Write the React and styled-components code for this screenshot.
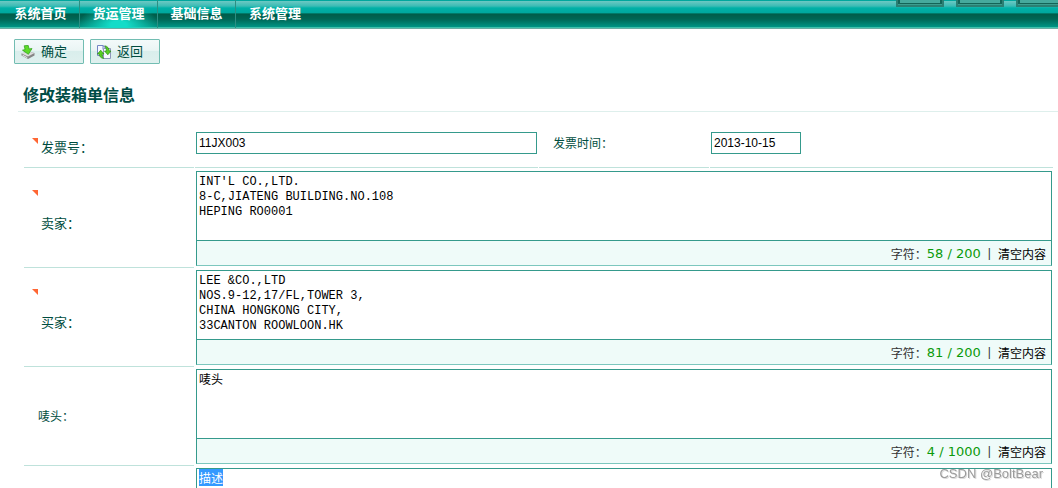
import React, { useEffect, useRef, useState } from "react";
import styled, { createGlobalStyle, css } from "styled-components";

const menus = ["系统首页", "货运管理", "基础信息", "系统管理"];

const DownloadIcon = () => (
  <svg width="14" height="14" viewBox="0 0 14 14" aria-hidden="true">
    <path d="M.5 8.500 6.500 6.500l7 1.500v2.500L7 14l-6.500-3.500z" fill="#858585" />
    <path d="M.5 8.500 6.500 6.500l7 1.500L7 11.500z" fill="#dcdcdc" />
    <path d="M1.500 10.200l4.800 2.500" stroke="#f2f2f2" strokeWidth="1" />
    <path d="M3.200.8 7.200.4l.9 3.500 2.900-.3L7.400 9.300 1.500 5.200l2.600-.6z" fill="#5ddb28" stroke="#35a51f" strokeWidth=".8" />
  </svg>
);

const SwapIcon = () => (
  <svg width="14" height="14" viewBox="0 0 14 14" aria-hidden="true">
    <path d="M.5.500h5.500l2 2v8H.500z" fill="#f6f9ff" stroke="#7485c4" />
    <path d="M6 4.500V.500l2 2" fill="none" stroke="#7485c4" />
    <path d="M6.500 3.500h7v10h-7z" fill="#f6f9ff" stroke="#8f98ba" />
    <path d="M3.700 5.200 7 9H5.100c0 1.800.4 3 1.600 4.500C4 13.300 2.300 11.500 2.200 9H.4z" fill="#56cf22" stroke="#2b8c14" strokeWidth=".7" />
    <path d="M10.800 9.800 7.500 6h1.900c0-1.800-.4-3.600-1.600-5.200C10.500 1.200 12.200 3.500 12.300 6H14z" fill="#56cf22" stroke="#2b8c14" strokeWidth=".7" />
  </svg>
);

const CountArea = ({ id, label, initial, count, max, mono, selected }) => {
  const [text, setText] = useState(initial);
  const [used, setUsed] = useState(count);
  const area = useRef(null);

  useEffect(() => {
    if (selected) {
      area.current.focus({ preventScroll: true });
      area.current.select();
    }
  }, [selected]);

  const change = (value) => {
    setText(value);
    setUsed(value.length);
  };

  return (
    <AreaBox>
      <Area
        id={id}
        ref={area}
        aria-label={label}
        $mono={mono}
        spellCheck={false}
        value={text}
        onChange={(e) => change(e.target.value)}
      />
      {max && (
        <Counter>
          <span>字符：</span>
          <Count>{used} / {max}</Count>
          <Bar>|</Bar>
          <ClearButton type="button" onClick={() => change("")}>清空内容</ClearButton>
        </Counter>
      )}
    </AreaBox>
  );
};

const App = () => {
  const [active, setActive] = useState(1);

  return (
    <>
      <GlobalStyle />
      <Page>
        <TopBar>
          <Menu>
            {menus.map((menu, i) => (
              <MenuItem
                key={menu}
                href="#"
                $active={active === i}
                onClick={(e) => {
                  e.preventDefault();
                  setActive(i);
                }}
              >
                {menu}
              </MenuItem>
            ))}
          </Menu>
          <Tabs>
            <Tab />
            <Tab />
            <Tab />
          </Tabs>
        </TopBar>

        <Toolbar>
          <ToolButton type="button"><DownloadIcon />确定</ToolButton>
          <ToolButton type="button"><SwapIcon />返回</ToolButton>
        </Toolbar>

        <Title>修改装箱单信息</Title>

        <Form onSubmit={(e) => e.preventDefault()}>
          <FieldRow>
            <LabelCell $required>
              <Flag />
              <Label htmlFor="invoiceNo">发票号：</Label>
            </LabelCell>
            <InputCell>
              <TextInput id="invoiceNo" defaultValue="11JX003" />
            </InputCell>
            <LabelCell>
              <Label htmlFor="invoiceTime" $small>发票时间：</Label>
            </LabelCell>
            <InputCell>
              <TextInput id="invoiceTime" defaultValue="2013-10-15" $short />
            </InputCell>
          </FieldRow>

          <AreaRow>
            <LabelCell $required $tall>
              <Flag />
              <Label htmlFor="seller">卖家：</Label>
            </LabelCell>
            <CountArea
              id="seller"
              mono
              initial={"INT'L CO.,LTD.\n8-C,JIATENG BUILDING.NO.108\nHEPING RO0001"}
              count={58}
              max={200}
            />
          </AreaRow>
          <AreaRow>
            <LabelCell $required $tall>
              <Flag />
              <Label htmlFor="buyer">买家：</Label>
            </LabelCell>
            <CountArea
              id="buyer"
              mono
              initial={"LEE &CO.,LTD\nNOS.9-12,17/FL,TOWER 3,\nCHINA HONGKONG CITY,\n33CANTON ROOWLOON.HK"}
              count={81}
              max={200}
            />
          </AreaRow>
          <AreaRow>
            <LabelCell>
              <Label htmlFor="marks" $small>唛头：</Label>
            </LabelCell>
            <CountArea id="marks" initial="唛头" count={4} max={1000} />
          </AreaRow>
          <AreaRow>
            <LabelCell />
            <CountArea id="description" label="描述" initial="描述" selected />
          </AreaRow>
        </Form>
        <Watermark>CSDN @BoltBear</Watermark>
      </Page>
    </>
  );
};

export default App;

const GlobalStyle = createGlobalStyle`
  * {
    box-sizing: border-box;
  }
  body {
    margin: 0;
    background: #fff;
    color: #333;
    font-family: "Liberation Sans", "Noto Sans CJK SC", sans-serif;
    font-size: 12px;
  }
`

const Page = styled.div`
  height: 100vh;
  overflow: hidden;
`

const TopBar = styled.header`
  display: flex;
  justify-content: space-between;
  height: 29px;
  padding-left: 2px;
  overflow: hidden;
  border-bottom: 1px solid #6aaea4;
  background: linear-gradient(
    #00a79d 0 1px,
    #6cc8c3 1px,
    #3bbcb5 6px,
    #00b0a7 8px,
    #00a79d 13px,
    #007a69 13px 14px,
    #005c49 14px,
    #006655 19px,
    #009585 27px,
    #3fc0ac 27px 28px
  );
`

const Menu = styled.nav`
  display: flex;
`

const MenuItem = styled.a`
  width: 78px;
  height: 28px;
  line-height: 27px;
  text-align: center;
  font-size: 13px;
  font-weight: bold;
  color: #fff;
  text-decoration: none;
  border-right: 1px solid #2c8f83;
  ${({ $active }) => $active && css`
    background: radial-gradient(ellipse 40px 22px at 50% 90%, #14dcc8 20%, rgba(20, 220, 200, 0));
  `}
  &:last-child {
    border-right: 0;
  }
`

const Tabs = styled.div`
  display: flex;
  gap: 12px;
  width: 162px;
`

const Tab = styled.div`
  flex: none;
  width: 48px;
  height: 7px;
  border: 2px solid #2c7f73;
  border-top: 0;
  background: #46a99d;
  box-shadow: inset 0 -1px 0 #3c9d8f, inset 2px -2px 0 #136457, inset -2px 0 0 #136457;
`

const Toolbar = styled.div`
  display: flex;
  gap: 6px;
  padding: 10px 14px 0;
`

const ToolButton = styled.button`
  display: flex;
  align-items: center;
  gap: 6px;
  width: 70px;
  height: 25px;
  padding: 0 6px;
  border: 1px solid #72bdb2;
  border-radius: 1px;
  background: linear-gradient(#f3fafa 0, #eaf5f4 45%, #d9eeec 50%, #dff0ee 100%);
  color: #004d40;
  font-family: inherit;
  font-size: 13px;
  line-height: 20px;
`

const Title = styled.h1`
  margin: 15px 0 0 18px;
  padding-left: 5px;
  height: 33px;
  line-height: 33px;
  border-bottom: 1px solid #deefec;
  color: #004d46;
  font-size: 16px;
  font-weight: bold;
`

const Form = styled.form`
  margin: 7px 5px 0 24px;
`

const FieldRow = styled.div`
  display: grid;
  grid-template-columns: 170px 1fr 170px 1fr;
  column-gap: 1px;
  height: 49px;
  margin-bottom: 1px;
`

const AreaRow = styled.div`
  display: grid;
  grid-template-columns: 170px 1fr;
  column-gap: 1px;
`

const LabelCell = styled.div`
  display: flex;
  align-items: center;
  padding-top: 2px;
  padding-left: 14px;
  border-bottom: 1px solid #bfe2db;
  ${({ $required }) => $required && css`
    align-items: flex-start;
    gap: 3px;
    padding: 19px 0 0 8px;
  `}
  ${({ $tall }) => $tall && css`
    flex-direction: column;
    gap: 18px;
    padding-top: 21px;
    label {
      padding-left: 9px;
    }
  `}
`

const Flag = styled.span`
  width: 6px;
  height: 6px;
  background: #ff6633;
  clip-path: polygon(0 0, 100% 0, 100% 100%);
`

const Label = styled.label`
  line-height: 20px;
  font-size: ${({ $small }) => ($small ? "12px" : "13px")};
  color: #004d40;
`

const InputCell = styled.div`
  display: flex;
  align-items: center;
  padding: 0 1px;
  border-bottom: 1px solid #bfe2db;
`

const TextInput = styled.input`
  width: ${({ $short }) => ($short ? "90px" : "100%")};
  height: 22px;
  padding: 0 2px;
  border: 1px solid #359a8c;
  border-radius: 0;
  outline: none;
  color: #000;
  font-family: inherit;
  font-size: 12px;
`

const AreaBox = styled.div`
  margin: 2px 1px;
  border: 1px solid #359a8c;
  border-bottom-color: #7cc7be;
`

const Area = styled.textarea`
  display: block;
  width: 100%;
  height: 68px;
  padding: ${({ $mono }) => ($mono ? "3px 2px" : "1px 2px")};
  border: 0;
  outline: none;
  resize: none;
  overflow: hidden;
  color: #000;
  font-family: ${({ $mono }) => ($mono ? '"Liberation Mono", monospace' : '"Noto Sans CJK SC", sans-serif')};
  font-size: 12px;
  line-height: 15px;
  &::selection {
    background: #3399ff;
    color: #fff;
  }
`

const Counter = styled.div`
  display: flex;
  align-items: center;
  justify-content: flex-end;
  height: 25px;
  padding-right: 5px;
  border-top: 1px solid #359a8c;
  background: #effbf9;
`

const Count = styled.span`
  color: #0a9a0a;
  font-family: "DejaVu Sans", sans-serif;
  font-size: 13px;
`

const Bar = styled.span`
  margin: 0 7px;
`

const ClearButton = styled.button`
  padding: 0;
  border: 0;
  background: none;
  color: #000;
  font-family: inherit;
  font-size: 12px;
`

/* floats over the corner of the form */
const Watermark = styled.div`
  position: fixed;
  right: 15px;
  bottom: 5px;
  color: #9c9c9c;
  font-size: 13px;
  line-height: 18px;
  text-shadow: 1px 1px 0 #ddd;
  pointer-events: none;
`
